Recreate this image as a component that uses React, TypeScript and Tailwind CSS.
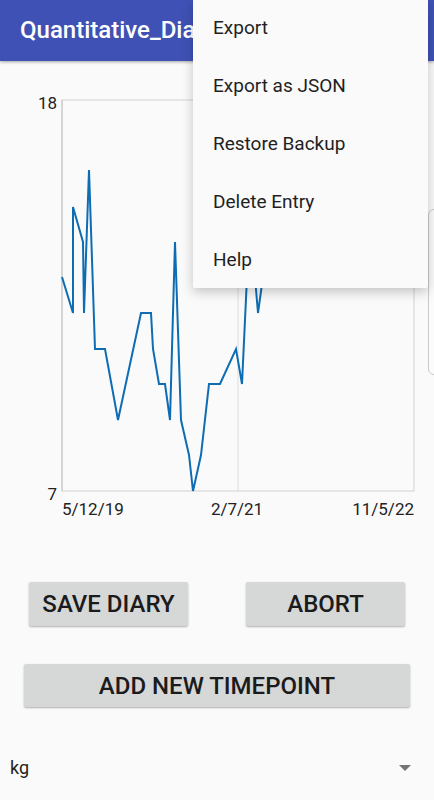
import React from 'react';

const pts: [number, number][] = [
  [62, 277], [73, 313], [73, 207], [83, 242], [84, 313], [89, 170],
  [95, 349], [105, 349], [118, 420], [141, 313], [151, 313], [153, 349],
  [159, 384], [165, 384], [170, 420], [175, 242], [181, 420], [189, 455],
  [193, 491], [201, 455], [209, 384], [220, 384], [236, 349], [242, 384],
  [247, 277], [252, 242], [258, 313], [263, 277], [270, 206], [280, 242],
  [292, 206], [305, 242],
];

function Chart() {
  const d = pts.map((p, i) => `${i === 0 ? 'M' : 'L'}${p[0]} ${p[1]}`).join(' ');
  return (
    <svg width={434} height={480} viewBox="0 61 434 480" className="block">
      <line x1={238} y1={100} x2={238} y2={491} stroke="#dedede" strokeWidth={1} />
      <rect x={62} y={100} width={352} height={391} fill="none" stroke="#d2d2d2" strokeWidth={1} />
      <line x1={62} y1={100} x2={62} y2={491} stroke="#c4c4c4" strokeWidth={1} />
      <path d={d} fill="none" stroke="#0e6cb3" strokeWidth={2} strokeLinejoin="miter" />
      <g fontFamily="Roboto, 'Liberation Sans', sans-serif" fontSize={17} fill="#222">
        <text x={57} y={109} textAnchor="end">18</text>
        <text x={57} y={500} textAnchor="end">7</text>
        <text x={62} y={515}>5/12/19</text>
        <text x={237} y={515} textAnchor="middle">2/7/21</text>
        <text x={414} y={515} textAnchor="end">11/5/22</text>
      </g>
    </svg>
  );
}

export default function App() {
  const menu = ['Export', 'Export as JSON', 'Restore Backup', 'Delete Entry', 'Help'];
  return (
    <div className="relative w-[434px] h-[800px] overflow-hidden bg-[#fafafa] font-['Roboto','Liberation_Sans',sans-serif]">
      {/* Toolbar */}
      <div className="h-[61px] bg-[#3f51b5] flex items-center pl-5 pb-[2px] shadow-[0_1px_3px_rgba(0,0,0,0.35)]">
        <span className="text-white text-[24px] font-medium whitespace-nowrap">Quantitative_Diary</span>
      </div>

      <Chart />

      {/* Actions */}
      <div className="mt-[41px] flex pl-[29px] gap-[58px]">
        <button className="w-[159px] h-[44px] bg-[#d6d7d7] rounded-[2px] shadow-[0_1px_2px_rgba(0,0,0,0.3)] text-[24px] font-medium text-[#1b1b1b]">
          SAVE DIARY
        </button>
        <button className="w-[159px] h-[44px] bg-[#d6d7d7] rounded-[2px] shadow-[0_1px_2px_rgba(0,0,0,0.3)] text-[24px] font-medium text-[#1b1b1b]">
          ABORT
        </button>
      </div>

      <div className="mt-[38px] pl-[24px]">
        <button className="w-[386px] h-[43px] bg-[#d6d7d7] rounded-[2px] shadow-[0_1px_2px_rgba(0,0,0,0.3)] text-[24px] font-medium text-[#1b1b1b]">
          ADD NEW TIMEPOINT
        </button>
      </div>

      {/* Unit spinner */}
      <div className="mt-[38px] h-[45px] flex items-center justify-between pl-[10px] pr-[23px]">
        <span className="text-[18px] text-[#222]">kg</span>
        <span className="w-0 h-0 border-l-[6px] border-r-[6px] border-t-[6px] border-l-transparent border-r-transparent border-t-[#757575]" />
      </div>

      {/* Edge handle */}
      <div className="absolute left-[428px] top-[209px] w-[20px] h-[166px] rounded-l-[6px] border border-[#c9c9c9] bg-[#fbfbfb]" />

      {/* Overflow menu */}
      <div className="absolute top-0 left-[193px] w-[235px] h-[288px] overflow-hidden bg-[#fafafa] rounded-b-[2px] shadow-[0_4px_12px_rgba(0,0,0,0.22)]">
        {menu.map((m) => (
          <div key={m} className="h-[58px] shrink-0 pl-[20px] pb-[2px] flex items-center text-[19px] text-[#1f1f1f]">
            {m}
          </div>
        ))}
      </div>
    </div>
  );
}
